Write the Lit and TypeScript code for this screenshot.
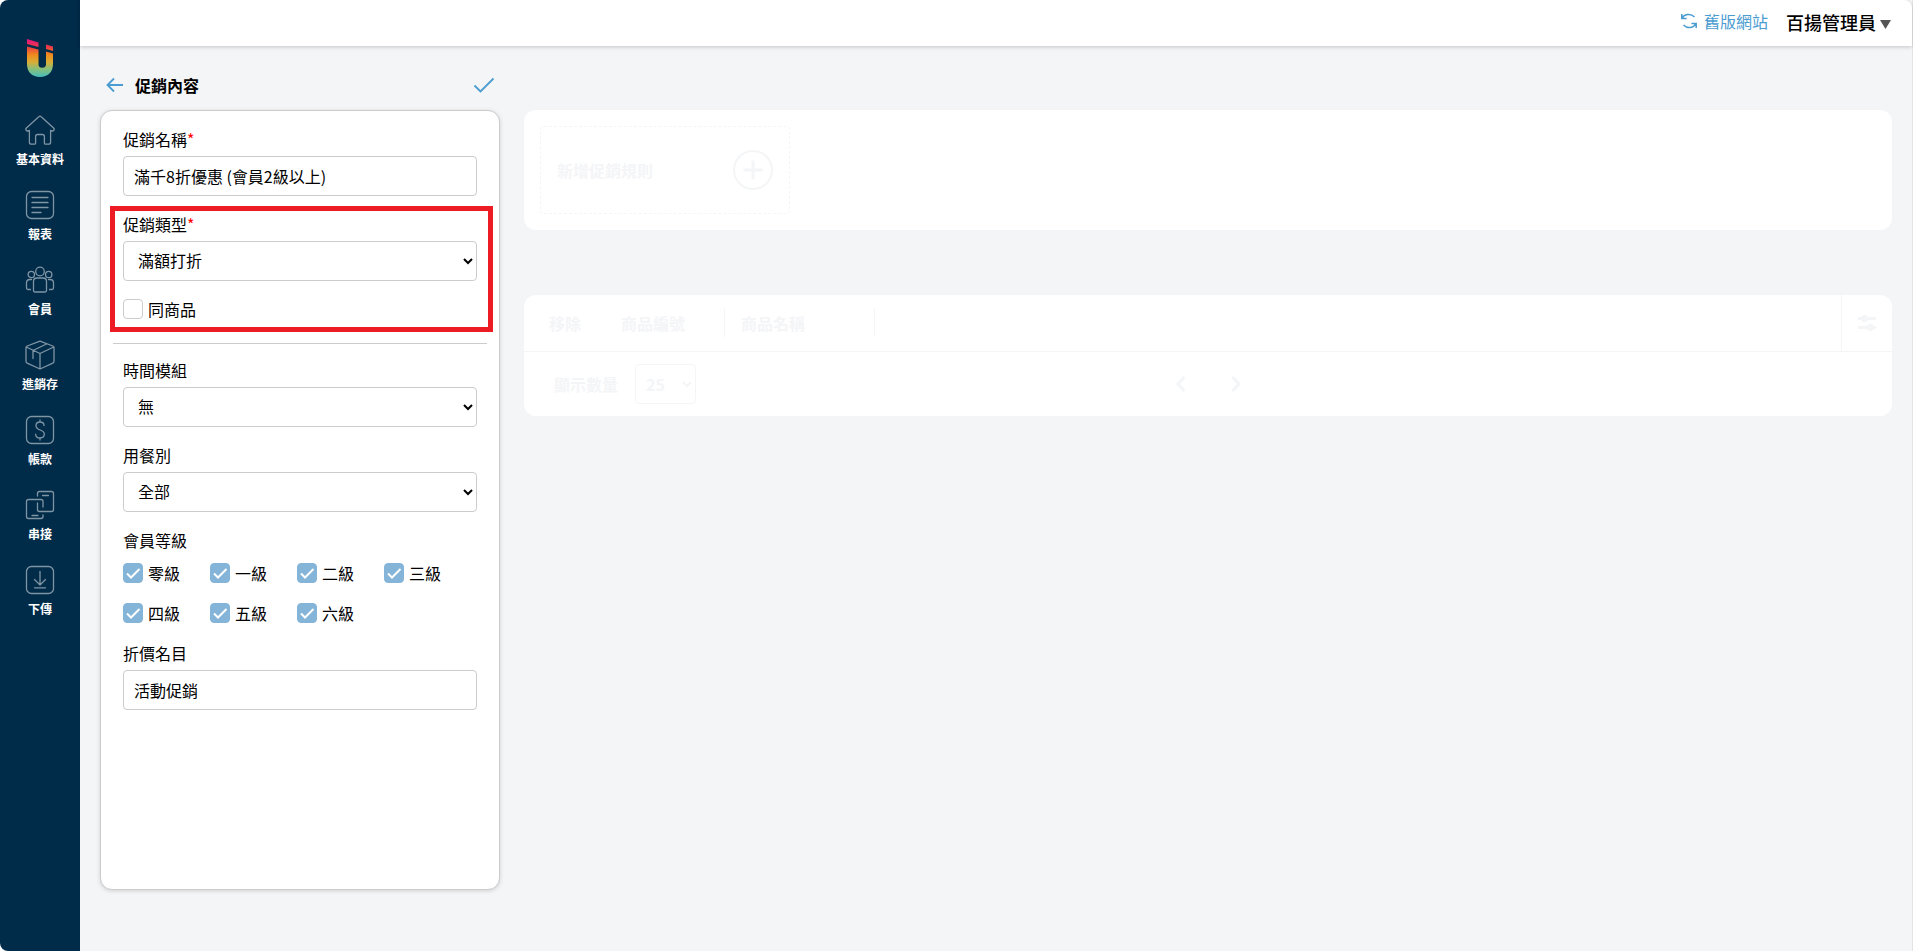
import { LitElement, html, css, svg } from "lit";
import { customElement, property, state } from "lit/decorators.js";

const navItems = [
  {
    label: "基本資料",
    icon: svg`<path d="M15 1.2c.5 0 .9.2 1.200.5L28.600 13c.8.8.8 1.500.2 2.300s-1.500.8-2.300.3l-.9-.2v11.800c0 1.300-.8 2-2 2h-3.200c-.6 0-1-.4-1-1v-6.700c0-1.200-.8-2-2-2h-4.800c-1.200 0-2 .8-2 2v6.700c0 .6-.4 1-1 1H6.400c-1.200 0-2-.7-2-2V15.400l-.9.2c-.8.500-1.700.5-2.300-.3s-.6-1.500.2-2.300L13.800 1.700c.3-.3.7-.5 1.200-.5z"/>`,
  },
  {
    label: "報表",
    icon: svg`<rect x="1.500" y="1.500" width="27" height="27" rx="5"/><path d="M7 7.500h16M7 12.500h16M7 17.500h16M7 22.500h9"/>`,
  },
  {
    label: "會員",
    icon: svg`<circle cx="15" cy="6.500" r="4.300"/><circle cx="6.300" cy="9.500" r="3.200"/><circle cx="23.700" cy="9.500" r="3.200"/><path d="M12 13h6c2.200 0 3.500 1.500 3.500 3.500v9c0 1-.5 1.500-1.500 1.500H10c-1 0-1.500-.5-1.500-1.500v-9c0-2 1.300-3.500 3.500-3.500zM6.500 14.500H5c-2.200 0-3.500 1.300-3.500 3.500v5c0 1 .5 1.500 1.500 1.500h2.500M23.500 14.500H25c2.200 0 3.500 1.300 3.500 3.500v5c0 1-.5 1.500-1.500 1.500h-2.500"/>`,
  },
  {
    label: "進銷存",
    icon: svg`<path d="M15 1.200 27.800 6c.8.300 1.200.8 1.200 1.600v14c0 .8-.4 1.300-1.200 1.600L15 29 2.200 23.200C1.400 22.900 1 22.400 1 21.600v-14C1 6.800 1.400 6.300 2.200 6zM1.300 7 15 13.500 28.700 7M15 13.500V29M8 18.500v-8L21.500 4"/>`,
  },
  {
    label: "帳款",
    icon: svg`<rect x="1.500" y="1.500" width="27" height="27" rx="5"/><path d="M19 10.500C19 8 17.300 7 15 7s-4 1.300-4 3.700c0 5.300 8.300 3.300 8.300 8.400 0 2.500-1.900 3.900-4.300 3.900s-4.300-1.300-4.300-3.800M15 5v2M15 23v2"/>`,
  },
  {
    label: "串接",
    icon: svg`<path d="M12.500 6V3.500c0-1.200.8-2 2-2h12c1.200 0 2 .8 2 2v16c0 1.200-.8 2-2 2h-12c-1.200 0-2-.8-2-2V13M17.500 5.500h6M18 17v-5.500c0-1.200-.8-2-2-2H3.500c-1.200 0-2 .8-2 2v15c0 1.200.8 2 2 2H16c1.200 0 2-.8 2-2V25M7 25.500h6"/>`,
  },
  {
    label: "下傳",
    icon: svg`<rect x="1.500" y="1.500" width="27" height="27" rx="5"/><path d="M15 6.500v13.500M9.500 14.500 15 20l5.500-5.500M9.500 22.800h11"/>`,
  },
];

@customElement("side-nav")
export class SideNav extends LitElement {
  static styles = css`
    :host {
      display: flex;
      flex-direction: column;
      align-items: center;
      width: 80px;
      flex: none;
      box-sizing: border-box;
      padding-top: 38px;
      background: #002b49;
      border-radius: 8px 0 0 8px;
    }
    .logo {
      width: 28px;
      height: 40px;
    }
    .menu {
      list-style: none;
      margin: 37px 0 0;
      padding: 0;
      width: 100%;
    }
    .link {
      display: flex;
      flex-direction: column;
      align-items: center;
      gap: 5px;
      height: 75px;
      color: #fff;
      font-size: 12px;
      font-weight: 700;
      line-height: 18px;
      text-decoration: none;
    }
    .icon {
      width: 30px;
      height: 30px;
      fill: none;
      stroke: #7f95a4;
      stroke-width: 1.3;
      stroke-linecap: round;
      stroke-linejoin: round;
    }
  `;

  render() {
    return html`
      <svg class="logo" viewBox="0 0 28 40" aria-hidden="true">
        <defs>
          <linearGradient id="flame" x1="0" y1="0" x2="0" y2="40" gradientUnits="userSpaceOnUse">
            <stop offset="0.05" stop-color="#e5177b" />
            <stop offset="0.22" stop-color="#ea3a48" />
            <stop offset="0.42" stop-color="#f08a1d" />
            <stop offset="0.6" stop-color="#d9ae35" />
            <stop offset="0.78" stop-color="#86bf7c" />
            <stop offset="1" stop-color="#3fbcc4" />
          </linearGradient>
        </defs>
        <path
          fill="url(#flame)"
          d="M1 1l11.500 3.500v4.500L1 6zM20 6.500l7 2v4.500l-7-2zM1 8.500l11.500 3v15c0 2 1.300 3.300 3.700 3.300s3.800-1.300 3.800-3.300V13.500l7 2V26c0 8-5 13-13 13S1 34 1 26z"
        />
      </svg>
      <nav aria-label="主選單">
        <ul class="menu">
          ${navItems.map(
            (item) => html`<li>
              <a class="link" href="#">
                <svg class="icon" viewBox="0 0 30 30" aria-hidden="true">${item.icon}</svg>
                ${item.label}
              </a>
            </li>`
          )}
        </ul>
      </nav>
    `;
  }
}

@customElement("top-bar")
export class TopBar extends LitElement {
  static styles = css`
    :host {
      display: flex;
      justify-content: flex-end;
      align-items: center;
      gap: 18px;
      height: 46px;
      flex: none;
      box-sizing: border-box;
      padding: 0 21px 4px 0;
      background: #fff;
      border-top-right-radius: 8px;
      box-shadow: 0 1px 4px rgba(0, 0, 0, 0.2);
    }
    .legacy {
      display: flex;
      align-items: center;
      gap: 6px;
      color: #4b9cd0;
      font-size: 16px;
      line-height: 24px;
      text-decoration: none;
    }
    .refresh {
      width: 18px;
      height: 18px;
      fill: none;
      stroke: currentColor;
      stroke-width: 1.5;
    }
    .account {
      display: flex;
      align-items: center;
      gap: 4px;
      padding: 2px 0 0;
      border: 0;
      background: none;
      color: #000;
      font: inherit;
      font-size: 18px;
      font-weight: 500;
      line-height: 26px;
    }
    .caret {
      width: 11px;
      height: 9px;
      margin-top: 4px;
      fill: #555;
    }
  `;

  render() {
    return html`
      <a class="legacy" href="#">
        <svg class="refresh" viewBox="0 0 18 18" aria-hidden="true">
          <path d="M1.800 2v4.500h4.800M2 6.300C4 2.200 10.500.8 14.500 5M16.200 16v-4.500h-4.800M16 11.700C14 15.800 7.500 17.200 3.500 13" />
        </svg>
        舊版網站
      </a>
      <button class="account" type="button">
        百揚管理員
        <svg class="caret" viewBox="0 0 11 9" aria-hidden="true"><path d="M0 0h11L5.500 9z" /></svg>
      </button>
    `;
  }
}

@customElement("promo-form")
export class PromoForm extends LitElement {
  @property({ type: Array }) levels = ["零級", "一級", "二級", "三級", "四級", "五級", "六級"];
  @state() private sameProduct = false;

  static styles = css`
    :host {
      display: flex;
      flex-direction: column;
      width: 400px;
      flex: none;
      font-size: 16px;
      line-height: 22px;
      color: #000;
    }
    .head {
      display: flex;
      align-items: center;
      gap: 12px;
      height: 30px;
      margin-bottom: 10px;
      padding: 0 5px 0 6px;
    }
    .title {
      flex: 1;
      margin: 0;
      font-size: 16px;
      font-weight: 700;
    }
    .tool {
      display: flex;
      padding: 0;
      border: 0;
      background: none;
      color: #4b9cd0;
    }
    .glyph {
      fill: none;
      stroke: currentColor;
      stroke-width: 1.8;
    }
    .back {
      width: 17px;
      height: 16px;
    }
    .confirm {
      width: 22px;
      height: 18px;
    }
    .panel {
      flex: 1;
      box-sizing: border-box;
      padding: 17px 22px;
      border: 1px solid #ccc;
      border-radius: 12px;
      background: #fff;
      box-shadow: 0 1px 4px rgba(0, 0, 0, 0.15);
    }
    .field {
      margin-bottom: 17px;
    }
    .label {
      display: block;
      margin-bottom: 6px;
    }
    .required {
      color: #f00;
    }
    .control {
      display: block;
      width: 100%;
      height: 40px;
      box-sizing: border-box;
      margin: 0;
      padding: 0 10px;
      border: 1px solid #ccc;
      border-radius: 4px;
      background: #fff;
      color: #000;
      font: inherit;
    }
    .choice {
      padding-bottom: 2px;
    }
    .highlight {
      position: relative;
    }
    .highlight::after {
      content: "";
      position: absolute;
      inset: -7px -16px -13px -13px;
      border: 5px solid #ed1c24;
      pointer-events: none;
    }
    .highlight .field {
      margin-bottom: 18px;
    }
    .check {
      display: flex;
      align-items: center;
      gap: 5px;
      height: 20px;
    }
    .box {
      appearance: none;
      width: 20px;
      height: 20px;
      margin: 0;
      border: 1px solid #ccc;
      border-radius: 4px;
      background: #fff;
    }
    .box:checked {
      border-color: #84b5d9;
      background: #84b5d9
        url('data:image/svg+xml,<svg xmlns="http://www.w3.org/2000/svg" viewBox="0 0 18 18"><path d="M3 9.500l4 4 8.500-8.500" fill="none" stroke="white" stroke-width="2"/></svg>');
    }
    .divider {
      height: 1px;
      margin: 24px -10px 15px;
      border: 0;
      background: #ccc;
    }
    .levels {
      margin: 0 0 19px;
      padding: 0;
      border: 0;
    }
    .legend {
      margin-bottom: 12px;
      padding: 0;
    }
    .grid {
      display: grid;
      grid-template-columns: repeat(4, 87px);
      row-gap: 20px;
    }
  `;

  render() {
    return html`
      <div class="head">
        <button class="tool" type="button" aria-label="返回">
          <svg class="glyph back" viewBox="0 0 17 16" aria-hidden="true"><path d="M17 8H2M8 1.500 1.500 8 8 14.500" /></svg>
        </button>
        <h1 class="title">促銷內容</h1>
        <button class="tool" type="button" aria-label="確認">
          <svg class="glyph confirm" viewBox="0 0 22 18" aria-hidden="true"><path d="M1.500 9.500 7.500 15.500 20.500 2.500" /></svg>
        </button>
      </div>
      <form class="panel">
        <div class="field">
          <label class="label" for="name">促銷名稱<span class="required">*</span></label>
          <input class="control" id="name" type="text" value="滿千8折優惠 (會員2級以上)" />
        </div>
        <div class="highlight">
          <div class="field">
            <label class="label" for="kind">促銷類型<span class="required">*</span></label>
            <select class="control choice" id="kind"><option>滿額打折</option></select>
          </div>
          <label class="check">
            <input
              class="box"
              type="checkbox"
              .checked=${this.sameProduct}
              @change=${(e: Event) => (this.sameProduct = (e.target as HTMLInputElement).checked)}
            />
            同商品
          </label>
        </div>
        <hr class="divider" />
        <div class="field">
          <label class="label" for="time">時間模組</label>
          <select class="control choice" id="time"><option>無</option></select>
        </div>
        <div class="field">
          <label class="label" for="meal">用餐別</label>
          <select class="control choice" id="meal"><option>全部</option></select>
        </div>
        <fieldset class="levels">
          <legend class="legend">會員等級</legend>
          <div class="grid">
            ${this.levels.map(
              (level) => html`<label class="check"><input class="box" type="checkbox" checked />${level}</label>`
            )}
          </div>
        </fieldset>
        <div class="field">
          <label class="label" for="discount">折價名目</label>
          <input class="control" id="discount" type="text" value="活動促銷" />
        </div>
      </form>
    `;
  }
}

@customElement("promo-rules")
export class PromoRules extends LitElement {
  static styles = css`
    :host {
      display: flex;
      flex-direction: column;
      gap: 65px;
      flex: 1;
      min-width: 0;
      padding-top: 40px;
      color: #f4f5f7;
      font-size: 16px;
      font-weight: 700;
      line-height: 24px;
    }
    .card {
      border-radius: 12px;
      background: #fff;
    }
    .rules {
      padding: 16px;
    }
    .add {
      display: flex;
      align-items: center;
      justify-content: space-between;
      width: 250px;
      height: 88px;
      box-sizing: border-box;
      padding: 0 16px;
      border: 1px dashed #f4f5f7;
      border-radius: 4px;
      background: none;
      color: inherit;
      font: inherit;
    }
    .plus {
      width: 40px;
      height: 40px;
      fill: none;
      stroke: currentColor;
      stroke-width: 2;
    }
    .columns {
      width: 100%;
      border-collapse: collapse;
      table-layout: fixed;
    }
    .cell {
      height: 56px;
      padding: 0;
      border-bottom: 1px solid #f4f5f7;
      text-align: left;
    }
    .remove {
      width: 81px;
    }
    .code {
      width: 120px;
    }
    .name {
      width: 150px;
    }
    .settings {
      width: 50px;
      border-left: 1px solid #f4f5f7;
    }
    .text {
      display: block;
      padding-left: 16px;
      line-height: 28px;
    }
    .remove .text {
      padding-left: 25px;
    }
    .split {
      border-right: 1px solid #f4f5f7;
    }
    .tune {
      display: flex;
      justify-content: center;
      width: 100%;
      padding: 0;
      border: 0;
      background: none;
      color: inherit;
    }
    .sliders {
      width: 20px;
      height: 16px;
      fill: #fff;
      stroke: currentColor;
      stroke-width: 3;
      stroke-linecap: round;
    }
    .footer {
      display: grid;
      grid-template-columns: 1fr auto 1fr;
      align-items: center;
      height: 64px;
      padding: 0 30px;
    }
    .size {
      display: flex;
      align-items: center;
      gap: 17px;
    }
    .count {
      width: 61px;
      height: 40px;
      padding: 0 6px;
      border: 1px solid #f4f5f7;
      border-radius: 4px;
      background: #fff;
      color: #f4f5f7;
      font: inherit;
    }
    .pager {
      display: flex;
      gap: 45px;
    }
    .step {
      display: flex;
      padding: 0;
      border: 0;
      background: none;
      color: inherit;
    }
    .chevron {
      width: 10px;
      height: 16px;
      fill: none;
      stroke: currentColor;
      stroke-width: 3;
    }
  `;

  render() {
    return html`
      <section class="card rules">
        <button class="add" type="button">
          新增促銷規則
          <svg class="plus" viewBox="0 0 40 40" aria-hidden="true">
            <circle cx="20" cy="20" r="19" />
            <path stroke-width="3" d="M20 10.500v19M10.500 20h19" />
          </svg>
        </button>
      </section>
      <section class="card">
        <table class="columns">
          <thead>
            <tr>
              <th class="cell remove" scope="col"><span class="text">移除</span></th>
              <th class="cell code" scope="col"><span class="text split">商品編號</span></th>
              <th class="cell name" scope="col"><span class="text split">商品名稱</span></th>
              <td class="cell"></td>
              <td class="cell settings">
                <button class="tune" type="button" aria-label="欄位設定">
                  <svg class="sliders" viewBox="0 0 20 16" aria-hidden="true">
                    <path d="M2 3.500h16M2 12.500h16" />
                    <circle cx="7.500" cy="3.500" r="2" />
                    <circle cx="13.500" cy="12.500" r="2" />
                  </svg>
                </button>
              </td>
            </tr>
          </thead>
        </table>
        <div class="footer">
          <div class="size">
            <label for="count">顯示數量</label>
            <select class="count" id="count"><option>25</option></select>
          </div>
          <div class="pager">
            <button class="step" type="button" aria-label="上一頁">
              <svg class="chevron" viewBox="0 0 10 16" aria-hidden="true"><path d="M8.500 1 2 8l6.500 7" /></svg>
            </button>
            <button class="step" type="button" aria-label="下一頁">
              <svg class="chevron" viewBox="0 0 10 16" aria-hidden="true"><path d="M1.500 1 8 8l-6.500 7" /></svg>
            </button>
          </div>
        </div>
      </section>
    `;
  }
}

@customElement("app-root")
export class AppRoot extends LitElement {
  static styles = css`
    :host {
      display: flex;
      min-height: 100vh;
      box-sizing: border-box;
      border-right: 1px solid #e2e4e6;
      background: #fff;
      font-family: "Noto Sans CJK TC", "Noto Sans", sans-serif;
    }
    .page {
      display: flex;
      flex-direction: column;
      flex: 1;
      min-width: 0;
      background: #f4f5f7;
    }
    .body {
      display: flex;
      flex: 1;
      gap: 24px;
      padding: 24px 20px 61px;
    }
  `;

  render() {
    return html`
      <side-nav></side-nav>
      <div class="page">
        <top-bar></top-bar>
        <main class="body">
          <promo-form></promo-form>
          <promo-rules></promo-rules>
        </main>
      </div>
    `;
  }
}
